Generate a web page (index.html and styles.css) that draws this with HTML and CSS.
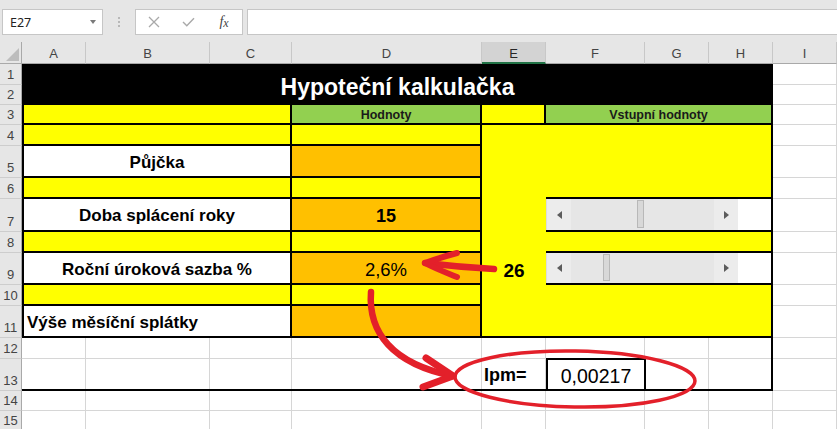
FILE: index.html
```html
<!DOCTYPE html>
<html lang="cs">
<head>
<meta charset="utf-8">
<title>Hypoteční kalkulačka</title>
<link rel="stylesheet" href="styles.css">
</head>
<body>
<div class="app">
  <div class="fbar">
    <div class="namebox"><span>E27</span><span class="dd"></span></div>
    <div class="grip"><i></i><i></i><i></i></div>
    <div class="fbtns">
      <svg class="ico" width="12" height="12" viewBox="0 0 12 12"><path d="M1 1 L11 11 M11 1 L1 11" stroke="#a9a9a9" stroke-width="1.3" fill="none"/></svg>
      <svg class="ico" width="13" height="10" viewBox="0 0 13 10"><path d="M1 5 L4.8 8.8 L12 1.2" stroke="#a9a9a9" stroke-width="1.4" fill="none"/></svg>
      <span class="fx"><i>f</i><i class="sub">x</i></span>
    </div>
    <div class="finput"></div>
  </div>

  <div class="sheet">
    <div class="corner"><span class="tri"></span></div>
    <div class="ch cA">A</div>
    <div class="ch cB">B</div>
    <div class="ch cC">C</div>
    <div class="ch cD">D</div>
    <div class="ch cE sel">E</div>
    <div class="ch cF">F</div>
    <div class="ch cG">G</div>
    <div class="ch cH">H</div>
    <div class="ch cI">I</div>

    <div class="rh r1">1</div>
    <div class="rh r2">2</div>
    <div class="rh r3">3</div>
    <div class="rh r4">4</div>
    <div class="rh r5">5</div>
    <div class="rh r6">6</div>
    <div class="rh r7">7</div>
    <div class="rh r8">8</div>
    <div class="rh r9">9</div>
    <div class="rh r10">10</div>
    <div class="rh r11">11</div>
    <div class="rh r12">12</div>
    <div class="rh r13">13</div>
    <div class="rh r14">14</div>
    <div class="rh r15">15</div>

    <div class="vl cA"></div>
    <div class="vl cB"></div>
    <div class="vl cC"></div>
    <div class="vl cD"></div>
    <div class="vl cE"></div>
    <div class="vl cF"></div>
    <div class="vl cG"></div>
    <div class="vl cH"></div>
    <div class="vl cI"></div>
    <div class="hl r1"></div>
    <div class="hl r2"></div>
    <div class="hl r3"></div>
    <div class="hl r4"></div>
    <div class="hl r5"></div>
    <div class="hl r6"></div>
    <div class="hl r7"></div>
    <div class="hl r8"></div>
    <div class="hl r9"></div>
    <div class="hl r10"></div>
    <div class="hl r11"></div>
    <div class="hl r12"></div>
    <div class="hl r13"></div>
    <div class="hl r14"></div>
    <div class="hl r15"></div>

    <div class="k title cAH r1_2">Hypoteční kalkulačka</div>

    <div class="y b bl cAC r3"></div>
    <div class="g b hd cD r3">Hodnoty</div>
    <div class="y b cE r3"></div>
    <div class="g b hd cFH r3">Vstupní hodnoty</div>

    <div class="y b bl cAC r4"></div>
    <div class="y b cD r4"></div>
    <div class="y bb cE r4_11"></div>
    <div class="y b cFH r4_6"></div>

    <div class="w b bl lbl cAC r5">Půjčka</div>
    <div class="o b cD r5"></div>

    <div class="y b bl cAC r6"></div>
    <div class="y b cD r6"></div>

    <div class="w b bl lbl cAC r7">Doba splácení roky</div>
    <div class="o b num cD r7">15</div>
    <div class="w b bl cFH r7"></div>
    <div class="sb cFH r7">
      <span class="sbtn"><i class="al"></i></span>
      <span class="trk"><i class="thumb" style="margin-left:66px"></i></span>
      <span class="sbtn"><i class="ar"></i></span>
    </div>

    <div class="y b bl cAC r8"></div>
    <div class="y b cD r8"></div>
    <div class="y b cFH r8"></div>

    <div class="w b bl lbl cAC r9">Roční úroková sazba %</div>
    <div class="o b pct cD r9">2,6%</div>
    <div class="num e9 cE r9">26</div>
    <div class="w b bl cFH r9"></div>
    <div class="sb cFH r9">
      <span class="sbtn"><i class="al"></i></span>
      <span class="trk"><i class="thumb" style="margin-left:32px"></i></span>
      <span class="sbtn"><i class="ar"></i></span>
    </div>

    <div class="y b bl cAC r10"></div>
    <div class="y b cD r10"></div>
    <div class="y b cFH r10_11"></div>

    <div class="w b bl lbl left cAC r11">Výše měsíční splátky</div>
    <div class="o b cD r11"></div>

    <div class="box cAH r12_13"></div>
    <div class="ipm cE r13">Ipm=</div>
    <div class="val cF r13">0,00217</div>
  </div>

  <svg class="ink" width="837" height="429" viewBox="0 0 837 429">
    <g fill="none" stroke="#e3202a" stroke-linecap="round" stroke-linejoin="round">
      <path d="M494 269 C 476 268, 450 266, 425 263" stroke-width="6.5"/>
      <path d="M457 253 C 446 256, 433 260, 425 263 C 434 268, 447 273, 457 277" stroke-width="6"/>
      <path d="M371 292 C 368 332, 392 364, 453 376" stroke-width="6.5"/>
      <path d="M426 358 L453 376 L423 387" stroke-width="7"/>
      <ellipse cx="575" cy="379" rx="120" ry="28" stroke-width="3.5" transform="rotate(1 575 379)"/>
    </g>
  </svg>
</div>
</body>
</html>
```

FILE: styles.css
```css
* { box-sizing: border-box; margin: 0; padding: 0; }
html, body { width: 837px; height: 429px; overflow: hidden; background: #fff; }
body { font-family: "Liberation Sans", Arial, sans-serif; color: #000; }
.app { position: relative; width: 837px; height: 429px; overflow: hidden; }

/* formula bar */
.fbar { height: 42px; background: #e6e6e6; display: flex; align-items: flex-start; padding-top: 9px; padding-left: 2px; }
.namebox { width: 101px; height: 26px; background: #fff; border: 1px solid #c6c6c6; display: flex; align-items: center; justify-content: space-between; padding: 0 6px 0 7px; font-family: "Noto Sans", "Liberation Sans", sans-serif; font-size: 12.5px; color: #222; }
.dd { width: 0; height: 0; border-left: 3.5px solid transparent; border-right: 3.5px solid transparent; border-top: 4px solid #7a7a7a; }
.grip { width: 32px; height: 26px; display: flex; flex-direction: column; align-items: center; justify-content: center; gap: 2px; }
.grip i { width: 2px; height: 2px; background: #b8b8b8; }
.fbtns { width: 108px; height: 26px; background: #fff; border: 1px solid #c6c6c6; display: grid; grid-template-columns: 35px 35px 36px; place-items: center; }
.fx { font-family: "Liberation Serif", serif; font-size: 14px; color: #444; }
.fx .sub { font-size: 12px; position: relative; top: 1px; }
.finput { flex: 1; margin-left: 4px; height: 26px; background: #fff; border: 1px solid #c6c6c6; border-right: 0; }

/* sheet grid */
.sheet { display: grid; grid-template-columns: 22px 64px 124px 82px 190px 64px 99px 64px 64px 64px; grid-template-rows: 22px 21px 20px 20px 21px 32px 21px 33px 21px 32px 21px 32px 21px 32px 20px 20px; }

.corner { grid-row: 1; grid-column: 1; background: #e6e6e6; border-right: 1px solid #a9a9a9; border-bottom: 1px solid #a9a9a9; display: flex; align-items: flex-end; justify-content: flex-end; padding: 0 2px 2px 0; }
.tri { width: 0; height: 0; border-left: 13px solid transparent; border-bottom: 13px solid #bdbdbd; }

.ch { grid-row: 1; background: #e6e6e6; border-right: 1px solid #c8c8c8; border-bottom: 1px solid #a9a9a9; display: flex; align-items: center; justify-content: center; padding-top: 2px; font-size: 13px; color: #444; }
.ch.sel { background: #d3d3d3; border-bottom: 2px solid #217346; color: #262626; }
.rh { grid-column: 1; background: #e6e6e6; border-bottom: 1px solid #cdcdcd; border-right: 1px solid #a9a9a9; display: flex; align-items: flex-end; justify-content: center; padding-bottom: 3px; font-size: 13px; line-height: 1; color: #444; }

.vl { grid-row: 2 / -1; border-right: 1px solid #d6d6d6; }
.hl { grid-column: 2 / -1; border-bottom: 1px solid #d6d6d6; }

/* placement */
.r1 { grid-row: 2; } .r2 { grid-row: 3; } .r3 { grid-row: 4; } .r4 { grid-row: 5; }
.r5 { grid-row: 6; } .r6 { grid-row: 7; } .r7 { grid-row: 8; } .r8 { grid-row: 9; }
.r9 { grid-row: 10; } .r10 { grid-row: 11; } .r11 { grid-row: 12; } .r12 { grid-row: 13; }
.r13 { grid-row: 14; } .r14 { grid-row: 15; } .r15 { grid-row: 16; }
.r1_2 { grid-row: 2 / 4; } .r4_6 { grid-row: 5 / 8; } .r4_11 { grid-row: 5 / 13; }
.r10_11 { grid-row: 11 / 13; } .r12_13 { grid-row: 13 / 15; }
.cA { grid-column: 2; } .cB { grid-column: 3; } .cC { grid-column: 4; } .cD { grid-column: 5; }
.cE { grid-column: 6; } .cF { grid-column: 7; } .cG { grid-column: 8; } .cH { grid-column: 9; } .cI { grid-column: 10; }
.cAC { grid-column: 2 / 5; } .cFH { grid-column: 7 / 10; } .cAH { grid-column: 2 / 10; }

/* fills and borders */
.k { background: #000; }
.y { background: #ffff00; }
.g { background: #92d050; }
.o { background: #ffc000; }
.w { background: #fff; }
.b { border-right: 2px solid #000; border-bottom: 2px solid #000; }
.bb { border-bottom: 2px solid #000; }
.bl { border-left: 2px solid #000; }

.title { color: #fff; font-weight: bold; font-size: 23px; display: flex; align-items: center; justify-content: center; padding-top: 6px; }
.hd { display: flex; align-items: center; justify-content: center; font-weight: bold; font-size: 12.5px; color: #1a1a1a; padding-top: 1px; }
.lbl { display: flex; align-items: center; justify-content: center; font-weight: bold; font-size: 17px; padding-top: 3px; }
.lbl.left { justify-content: flex-start; padding-left: 3px; }
.num { display: flex; align-items: center; justify-content: center; font-weight: bold; font-size: 18px; padding-top: 3px; }
.e9 { font-size: 19px; }
.pct { display: flex; align-items: center; justify-content: center; font-size: 18.5px; padding-top: 3px; }

/* scroll bar form controls */
.sb { display: flex; margin-right: 35px; margin-bottom: 2px; background: #e6e6e6; border-left: 1px solid #dcdcdc; }
.sbtn { width: 24px; display: flex; align-items: center; justify-content: center; background: #ececec; }
.trk { flex: 1; display: flex; align-items: stretch; padding: 1px 0 2px; }
.thumb { width: 7px; background: #d8d8d8; border: 1px solid #b8b8b8; }
.al { width: 0; height: 0; border-top: 4.5px solid transparent; border-bottom: 4.5px solid transparent; border-right: 5px solid #5c5c5c; }
.ar { width: 0; height: 0; border-top: 4.5px solid transparent; border-bottom: 4.5px solid transparent; border-left: 5px solid #5c5c5c; }

/* row 12-13 */
.box { border-right: 2px solid #000; border-bottom: 2px solid #000; }
.ipm { display: flex; align-items: center; padding-left: 2px; padding-top: 1px; font-weight: bold; font-size: 18px; }
.val { border: 2px solid #000; border-bottom: 0; margin-top: -1px; margin-right: -1px; display: flex; align-items: center; justify-content: center; font-size: 19.5px; padding-top: 1px; }

/* hand-drawn annotation */
.ink { position: absolute; left: 0; top: 0; pointer-events: none; }
```
